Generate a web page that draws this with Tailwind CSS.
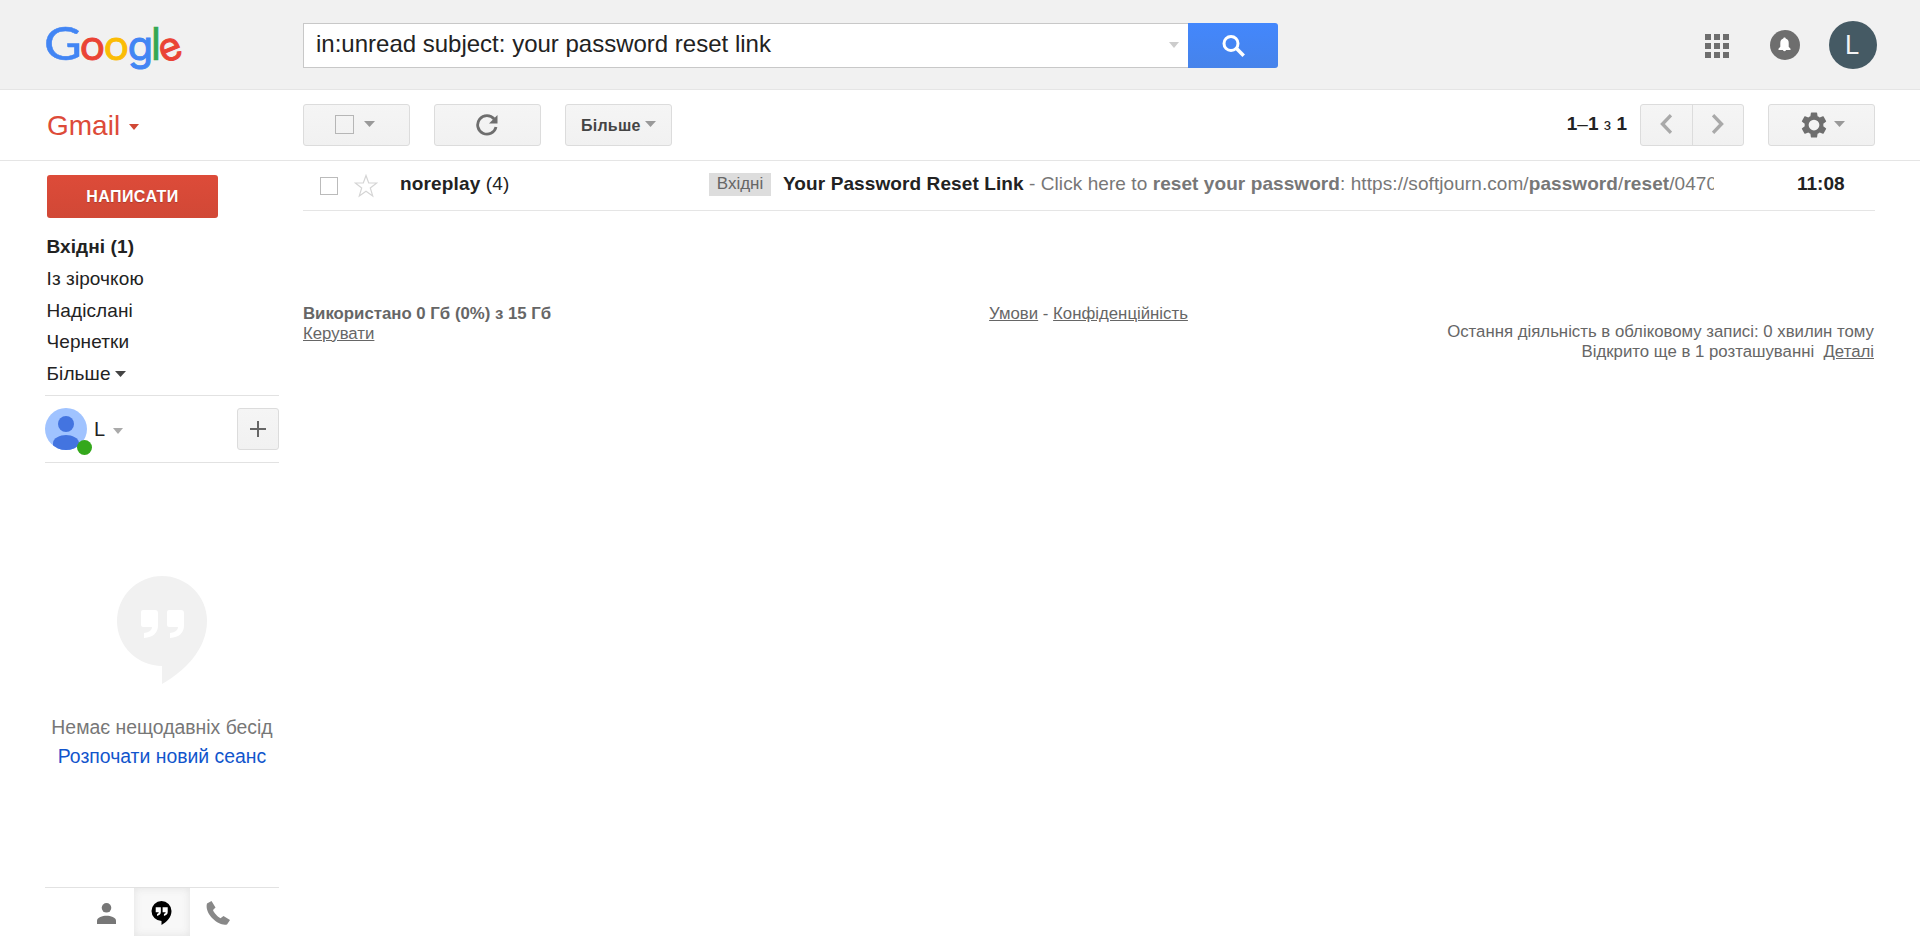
<!DOCTYPE html>
<html lang="uk"><head><meta charset="utf-8"><title>Gmail</title>
<script src="https://cdn.jsdelivr.net/npm/@tailwindcss/browser@4"></script></head>
<body class="h-screen overflow-hidden bg-white font-['Liberation_Sans',Arial,sans-serif] text-[#222]">
<div class="flex h-full flex-col">
<header class="flex h-[90px] shrink-0 items-start border-b border-[#e5e5e5] bg-[#f1f1f1] pl-[45px] pr-[43px]">
  <svg class="h-[89px] w-[140px] shrink-0 overflow-visible font-['Inter',sans-serif] text-[39px]" viewBox="0 0 140 89" text-anchor="middle" stroke-width="1" aria-label="Google">
    <text transform="translate(18 59.500) scale(1.130 1)" class="font-['Lato',sans-serif] text-[46px]" fill="#4285f4" stroke="#4285f4" stroke-width=".5">G</text>
    <text transform="translate(47.300 59.500) scale(1.080 1)" fill="#ea4335" stroke="#ea4335">o</text>
    <text transform="translate(71.400 59.500) scale(1.080 1)" fill="#fbbc05" stroke="#fbbc05">o</text>
    <text transform="translate(95.300 59.700) scale(1.060 1.040)" fill="#4285f4" stroke="#4285f4">g</text>
    <text x="111" y="59.800" class="font-['Lato',sans-serif] text-[44px]" fill="#34a853" stroke="#34a853" stroke-width=".5">l</text>
    <text transform="translate(129.300 59.500) rotate(-22)" fill="#ea4335" stroke="#ea4335">e</text>
  </svg>
  <div class="ml-[118px] mt-[23px] flex h-[45px]">
    <div class="flex w-[885px] items-center justify-between border border-r-0 border-[#c8c8c8] bg-white pl-3 pr-[9px]">
      <span class="mb-1 text-[24px] leading-8">in:unread subject: your password reset link</span>
      <svg class="-mt-0.5 h-1.5 w-2.5" viewBox="0 0 10 6"><path d="M0 0h10L5 6z" fill="#ccc"/></svg>
    </div>
    <div class="flex w-[90px] items-center justify-center rounded-r-[3px] bg-linear-to-b from-[#4387fd] to-[#4683ea] pl-0.5">
      <svg class="h-6 w-6" viewBox="0 0 24 24" fill="none" stroke="#fff"><circle cx="9" cy="9.500" r="7" stroke-width="3"/><path d="M14.300 14.300l7.400 7.400" stroke-width="3.600"/></svg>
    </div>
  </div>
  <div class="ml-auto flex h-[89px] items-start">
    <svg class="mt-[34px] h-6 w-6" viewBox="0 0 24 24" fill="#6e6e6e"><path d="M0 0h6v6H0zM9 0h6v6H9zM18 0h6v6h-6zM0 9h6v6H0zM9 9h6v6H9zM18 9h6v6h-6zM0 18h6v6H0zM9 18h6v6H9zM18 18h6v6h-6z"/></svg>
    <svg class="ml-[41px] mt-[30px] h-[30px] w-[30px]" viewBox="0 0 30 30"><circle cx="15" cy="15" r="15" fill="#6e6e6e"/><path d="M14.500 7.500c.8 0 1.200.5 1.200 1.100 2 .6 3 2.200 3 4.400v3.700l1.800 2v1.300H8.500v-1.300l1.800-2V13c0-2.200 1-3.800 3-4.400 0-.6.400-1.100 1.200-1.100zM12.900 19.600h3.200c0 1-.7 1.600-1.600 1.600s-1.600-.6-1.600-1.600z" fill="#fff"/></svg>
    <div class="ml-[29px] mt-[21px] flex h-12 w-12 items-center justify-center rounded-full bg-[#455a64] pr-0.5 font-['Roboto',sans-serif] text-[26px] text-white/95">L</div>
  </div>
</header>
<div class="flex h-[71px] shrink-0 items-start border-b border-[#e5e5e5] pl-[47px] pr-[45px] pt-[14px]">
  <div class="flex w-[256px] items-center text-[#dd4b39]"><span class="text-[28px] leading-[43px]">Gmail</span><svg class="ml-[9px] mt-0.5 h-[6px] w-2.5" viewBox="0 0 10 6"><path d="M0 0h10L5 6z" fill="#d14836"/></svg></div>
  <div class="flex gap-6">
    <div class="flex h-[42px] w-[107px] items-center rounded-[3px] border border-[#dcdcdc] bg-linear-to-b from-[#f5f5f5] to-[#f1f1f1] pl-[31px]"><span class="mb-px h-[19px] w-[19px] border border-[#b6b6b6]"></span><svg class="mb-0.5 ml-2.5 h-1.5 w-[11px]" viewBox="0 0 11 6"><path d="M0 0h11L5.500 6z" fill="#999"/></svg></div>
    <div class="flex h-[42px] w-[107px] items-center justify-center rounded-[3px] border border-[#dcdcdc] bg-linear-to-b from-[#f5f5f5] to-[#f1f1f1] pr-0.5"><svg class="h-[22px] w-[22px]" viewBox="0 0 22 22"><path d="M18.200 5A9.300 9.300 0 1 0 20 13" fill="none" stroke="#6e6e6e" stroke-width="2.800"/><path d="M21.500 1v8.500h-8.500z" fill="#6e6e6e"/></svg></div>
    <div class="flex h-[42px] w-[107px] items-center rounded-[3px] border border-[#dcdcdc] bg-linear-to-b from-[#f5f5f5] to-[#f1f1f1] pl-[15px] text-[16px] font-bold text-[#444]"><span class="mt-px tracking-[0.250px]">Більше</span><svg class="mb-0.5 ml-1 h-1.5 w-[11px]" viewBox="0 0 11 6"><path d="M0 0h11L5.500 6z" fill="#999"/></svg></div>
  </div>
  <div class="ml-auto flex">
    <div class="mr-[13px] text-[19px] leading-[39px]"><b>1</b>–<b>1</b> <span class="text-[16px]">з</span> <b>1</b></div>
    <div class="mr-6 flex h-[42px] w-[104px] rounded-[3px] border border-[#dcdcdc] bg-linear-to-b from-[#f5f5f5] to-[#f1f1f1]">
      <div class="flex w-[52px] items-center justify-center border-r border-[#dcdcdc] pr-0.5"><svg class="mb-0.5 h-5 w-3" viewBox="0 0 12 20" fill="none" stroke="#a9a9a9" stroke-width="3.400"><path d="M11 1.200L2.500 10l8.500 8.800"/></svg></div>
      <div class="flex w-[50px] items-center justify-center"><svg class="mb-0.5 h-5 w-3" viewBox="0 0 12 20" fill="none" stroke="#a9a9a9" stroke-width="3.400"><path d="M1 1.200L9.500 10 1 18.800"/></svg></div>
    </div>
    <div class="flex h-[42px] w-[107px] items-center rounded-[3px] border border-[#dcdcdc] bg-linear-to-b from-[#f5f5f5] to-[#f1f1f1] pl-[30px]">
      <svg class="mb-px h-[30px] w-[30px]" viewBox="0 0 24 24" fill="#6e6e6e"><path d="M19.430 12.980c.04-.32.07-.64.07-.98s-.03-.66-.07-.98l2.110-1.650c.19-.15.24-.42.12-.64l-2-3.460c-.12-.22-.39-.3-.61-.22l-2.490 1c-.52-.4-1.080-.73-1.690-.98l-.38-2.650C14.460 2.180 14.250 2 14 2h-4c-.25 0-.46.18-.49.42l-.38 2.650c-.61.25-1.170.59-1.690.98l-2.490-1c-.23-.09-.49 0-.61.22l-2 3.460c-.13.22-.07.49.12.64l2.110 1.650c-.04.32-.07.65-.07.98s.03.66.07.98l-2.110 1.650c-.19.15-.24.42-.12.64l2 3.460c.12.22.39.3.61.22l2.490-1c.52.4 1.080.73 1.690.98l.38 2.650c.03.24.24.42.49.42h4c.25 0 .46-.18.49-.42l.38-2.650c.61-.25 1.170-.59 1.690-.98l2.490 1c.23.09.49 0 .61-.22l2-3.460c.12-.22.07-.49-.12-.64l-2.110-1.650zM12 16.300a4.300 4.300 0 1 1 0-8.600 4.300 4.300 0 0 1 0 8.600z"/></svg>
      <svg class="mb-0.5 ml-[5px] h-1.5 w-[11px]" viewBox="0 0 11 6"><path d="M0 0h11L5.500 6z" fill="#999"/></svg>
    </div>
  </div>
</div>
<div class="flex min-h-0 flex-1">
  <aside class="flex w-[303px] shrink-0 flex-col pl-[45px] pr-6">
    <button class="ml-0.5 mt-[14px] h-[43px] w-[171px] shrink-0 rounded-[3px] bg-linear-to-b from-[#dd4b39] to-[#d14836] text-[16px] font-bold tracking-[0.4px] text-white text-shadow-xs">НАПИСАТИ</button>
    <nav class="ml-[1.500px] mt-[13px] flex flex-col text-[19px] leading-[31.800px] tracking-[0.1px]">
      <b>Вхідні (1)</b><span>Із зірочкою</span><span>Надіслані</span><span>Чернетки</span>
      <span class="flex items-center">Більше<svg class="ml-1 h-1.5 w-[11px]" viewBox="0 0 11 6"><path d="M0 0h11L5.500 6z" fill="#444"/></svg></span>
    </nav>
    <div class="mt-[5px] flex h-[68px] shrink-0 items-center border-y border-[#e2e2e2]">
      <div class="relative h-[42px] w-[42px]">
        <svg class="h-[42px] w-[42px]" viewBox="0 0 42 42"><clipPath id="av"><circle cx="21" cy="21" r="21"/></clipPath><g clip-path="url(#av)"><path d="M0 0h42v42H0z" fill="#a0c3ff"/><circle cx="21" cy="16" r="8" fill="#4374e0"/><path d="M8 42v-7c0-5 7-8 13-8s13 3 13 8v7z" fill="#4374e0"/></g></svg>
        <span class="absolute left-8 top-8 h-[15px] w-[15px] rounded-full bg-[#34a81c]"></span>
      </div>
      <span class="ml-[7px] mt-px text-[20px]">L</span>
      <svg class="ml-2 mt-1 h-1.5 w-2.5" viewBox="0 0 10 6"><path d="M0 0h10L5 6z" fill="#aaa"/></svg>
      <div class="ml-auto flex h-[42px] w-[42px] items-center justify-center rounded-[3px] border border-[#dcdcdc] bg-linear-to-b from-[#f5f5f5] to-[#f1f1f1]"><svg class="h-4 w-4" viewBox="0 0 16 16"><path d="M8 0v16M0 8h16" stroke="#666" stroke-width="2"/></svg></div>
    </div>
    <div class="flex flex-1 flex-col items-center pt-[113px] text-center text-[19.400px] leading-[29px]">
      <svg class="h-[108px] w-[90px]" viewBox="0 0 90 108"><path d="M45 0a45 45 0 0 1 45 45c0 28-22 50-45 63V90A45 45 0 0 1 45 0z" fill="#f1f1f1"/><path d="M26 34h12q3 0 3 3v12q0 12-14 13v-5q8-1 8-6h-9q-2 0-2-2V36q0-2 2-2zM52 34h12q3 0 3 3v12q0 12-14 13v-5q8-1 8-6h-9q-2 0-2-2V36q0-2 2-2z" fill="#fff"/></svg>
      <span class="mt-[29px] whitespace-nowrap text-[#777]">Немає нещодавніх бесід</span>
      <span class="whitespace-nowrap text-[#15c]">Розпочати новий сеанс</span>
    </div>
    <div class="flex h-[49px] shrink-0 justify-center border-t border-[#e2e2e2]">
      <div class="flex w-14 items-center justify-center pt-0.5"><svg class="h-[21px] w-[19px]" viewBox="0 0 19 21" fill="#777"><circle cx="9.500" cy="4.800" r="4.800"/><path d="M0 21v-3.500c0-3 5.500-4.700 9.500-4.700s9.500 1.700 9.500 4.700V21z"/></svg></div>
      <div class="flex w-14 items-center justify-center bg-[#f8f8f8] pr-px pt-0.5 inset-shadow-[0_0_8px_#e2e2e2]"><svg class="h-6 w-[21px]" viewBox="0 0 90 108"><path d="M45 0a45 45 0 0 1 45 45c0 28-22 50-45 63V90A45 45 0 0 1 45 0z"/><path d="M19 28h23v22q0 14-17 17v-8q8-2 8-8H19zM50 28h23v22q0 14-17 17v-8q8-2 8-8H50z" fill="#fff"/></svg></div>
      <div class="flex w-14 items-center justify-center pt-0.5"><svg class="h-6 w-6" viewBox="0 0 24 24" fill="#888"><path d="M1 2.500L5.500 0 9.500 6.500 7 9c1 3 4.500 6.500 7.500 8.300l3-2.300L24 19l-3 4.500C13 26-2 13 1 2.500z"/></svg></div>
    </div>
  </aside>
  <main class="mr-[45px] min-w-0 flex-1">
    <div class="flex h-[50px] items-start border-b border-[#e5e5e5] pl-[17px] text-[19px] leading-6">
      <span class="mt-4 h-[18px] w-[18px] border border-[#bbb]"></span>
      <svg class="ml-4 mt-[13px] h-6 w-6" viewBox="0 0 24 24"><path d="M12 1.500l2.700 7.500h8l-6.400 4.900 2.400 8L12 17.200l-6.700 4.700 2.400-8L1.300 9h8z" fill="none" stroke="#d5d5d5" stroke-width="1.200"/></svg>
      <span class="ml-[22px] mt-[11px] w-[309px] tracking-[0.15px]"><b>noreplay</b> (4)</span>
      <span class="mt-3 h-[23px] w-[62px] bg-[#ddd] text-center text-[17px] leading-[22px] text-[#666]">Вхідні</span>
      <div class="ml-3 mt-[11px] w-[931px] overflow-hidden whitespace-nowrap tracking-[0.075px] text-[#777]"><b class="tracking-[0.1px] text-[#222]">Your Password Reset Link</b> - Click here to <b>reset your password</b>: https://softjourn.com/<b>password</b>/<b>reset</b>/0470</div>
      <b class="ml-[83px] mt-[11px]">11:08</b>
    </div>
    <footer class="flex justify-between pr-px pt-[93px] text-[16.800px] leading-5 text-[#666]">
      <div class="w-[430px]"><b>Використано 0 Гб (0%) з 15 Гб</b><br><span class="underline">Керувати</span></div>
      <div><span class="underline">Умови</span> - <span class="underline">Конфіденційність</span></div>
      <div class="w-[430px] pt-[18px] text-right">Остання діяльність в обліковому записі: 0 хвилин тому<br>Відкрито ще в 1 розташуванні &nbsp;<span class="underline">Деталі</span></div>
    </footer>
  </main>
</div>
</div>
</body></html>
